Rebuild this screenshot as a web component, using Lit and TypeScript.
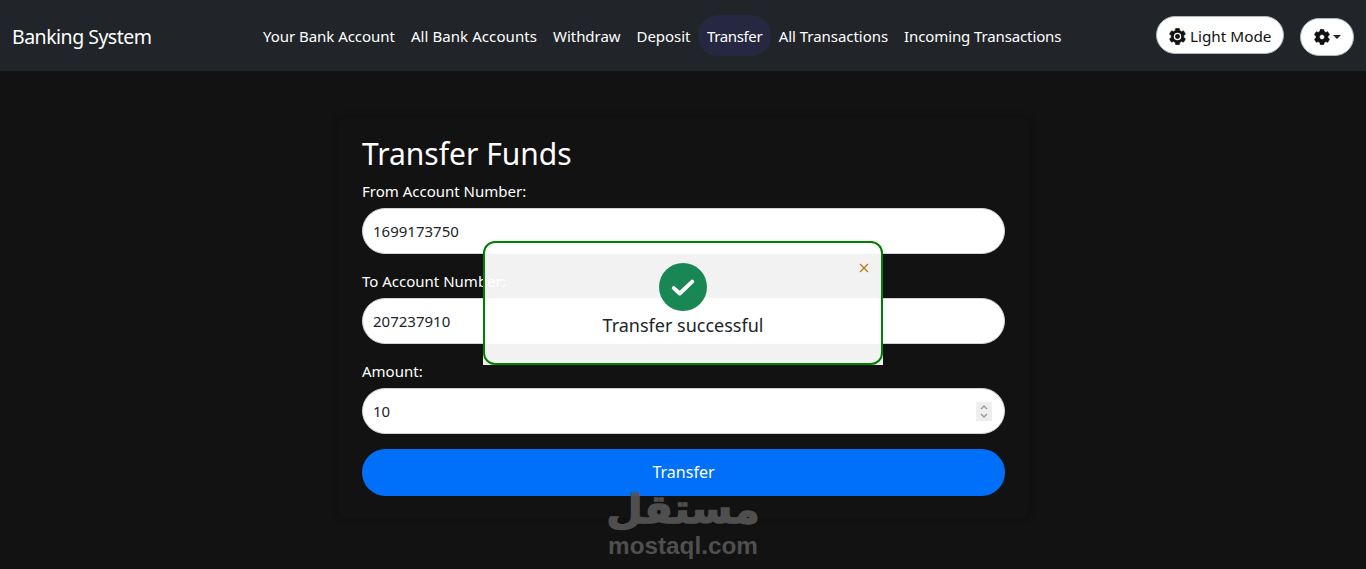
import { LitElement, html, css } from "lit";
import { customElement } from "lit/decorators.js";

const GEAR = "M487.4 315.7l-42.6-24.6c4.3-23.2 4.3-47 0-70.2l42.6-24.6c4.9-2.8 7.1-8.6 5.5-14-11.1-35.6-30-67.8-54.7-94.6-3.8-4.1-10-5.1-14.8-2.3L380.8 110c-17.9-15.4-38.5-27.3-60.8-35.1V25.8c0-5.6-3.9-10.5-9.4-11.7-36.7-8.2-74.3-7.8-109.2 0-5.5 1.2-9.4 6.1-9.4 11.7V75c-22.2 7.9-42.8 19.8-60.8 35.1L88.7 85.5c-4.9-2.8-11-1.9-14.8 2.3-24.7 26.7-43.6 58.9-54.7 94.6-1.7 5.4.6 11.2 5.5 14L67.3 221c-4.3 23.2-4.3 47 0 70.2l-42.6 24.6c-4.9 2.8-7.1 8.6-5.5 14 11.1 35.6 30 67.8 54.7 94.6 3.8 4.1 10 5.1 14.8 2.3l42.6-24.6c17.9 15.4 38.5 27.3 60.8 35.1v49.2c0 5.6 3.9 10.5 9.4 11.7 36.7 8.2 74.3 7.8 109.2 0 5.5-1.2 9.4-6.1 9.4-11.7v-49.2c22.2-7.9 42.8-19.8 60.8-35.1l42.6 24.6c4.9 2.8 11 1.9 14.8-2.3 24.7-26.7 43.6-58.9 54.7-94.6 1.5-5.5-.7-11.3-5.6-14.1zM256 336c-44.1 0-80-35.9-80-80s35.9-80 80-80 80 35.9 80 80-35.9 80-80 80z";

@customElement("app-root")
export class AppRoot extends LitElement {
  static styles = css`
    :host {
      display: block;
      height: 569px;
      overflow: hidden;
      position: relative;
      background: #121212;
      font-family: "Noto Sans", "Open Sans", sans-serif;
      color: #fff;
      font-size: 15px;
    }
    .nav {
      height: 71px;
      background: #212529;
      display: flex;
      align-items: center;
      padding: 0 12px;
      box-sizing: border-box;
    }
    .brand { font-size: 19.5px; letter-spacing: -0.5px; width: 243px; flex: none; padding-top: 2px; }
    .links { display: flex; align-items: center; flex: none; width: 881px; letter-spacing: -0.04px; }
    .link {
      padding: 0 8px;
      height: 41px;
      line-height: 43px;
      border-radius: 20px;
      white-space: nowrap;
    }
    .link:nth-child(2) { letter-spacing: 0.08px; }
    .link:nth-child(7) { letter-spacing: -0.12px; }
    .link.active { background: #252840; letter-spacing: -0.36px; padding: 0 8.5px; }
    .right { display: flex; align-items: center; margin-left: auto; }
    .btn {
      background: #fff;
      color: #111;
      border: 1px solid #adb5bd;
      border-radius: 19px;
      height: 38px;
      box-sizing: border-box;
      display: flex;
      align-items: center;
      white-space: nowrap;
    }
    .light { padding: 2px 0 0 12px; gap: 4px; width: 128px; font-size: 15.3px; margin-top: -1px; }
    .settings { margin-left: 16px; width: 54px; justify-content: center; gap: 3px; margin-top: 2px; }
    .caret { width: 0; height: 0; border-left: 4px solid transparent; border-right: 4px solid transparent; border-top: 4px solid #212529; }
    svg.gear { width: 16px; height: 16px; fill: #111; stroke: #111; stroke-width: 16; display: block; }
    svg.gear.sun { width: 17px; height: 17px; }
    .main { display: flex; justify-content: center; padding-top: 47px; }
    .card {
      width: 691px;
      box-sizing: border-box;
      padding: 16px 24px 22px;
      margin-left: 1px;
      background: #121212;
      border-radius: 8px;
      box-shadow: 0 0 8px rgba(0,0,0,.3);
    }
    h2 { margin: 0 0 7px; font-size: 30px; font-weight: 400; line-height: 40px; }
    label { display: block; line-height: 20px; height: 27px; margin-top: 5px; }
    .field {
      height: 46px;
      box-sizing: border-box;
      background: #fff;
      border: 1px solid #ced4da;
      border-radius: 23px;
      color: #212529;
      padding: 0 10px;
      display: flex;
      align-items: center;
      justify-content: space-between;
      margin-bottom: 17px;
    }
    .field.num { margin-bottom: 15px; }
    .spin { width: 16px; height: 19px; background: #eee; display: block; margin-right: 2px; }
    .submit {
      height: 47px;
      box-sizing: border-box;
      padding-bottom: 2px;
      background: #0070fb;
      border-radius: 24px;
      display: flex;
      align-items: center;
      justify-content: center;
      font-size: 16px;
    }
    .toast {
      position: absolute;
      left: 483px;
      top: 241px;
      width: 400px;
      height: 124px;
      background: rgba(255,255,255,.95);
    }
    .toast-in {
      height: 100%;
      box-sizing: border-box;
      border: 2px solid #008000;
      border-radius: 12px;
      display: flex;
      flex-direction: column;
      align-items: center;
      padding-top: 20px;
      color: #212529;
      font-size: 18px;
      position: relative;
    }
    .ok { width: 48px; height: 48px; border-radius: 50%; background: #198754; display: flex; align-items: center; justify-content: center; }
    .ok svg { width: 26px; height: 26px; }
    .msg { margin-top: -2px; line-height: 32px; }
    .x { position: absolute; right: 12px; top: 20px; width: 10px; height: 10px; }
    .wm {
      position: absolute;
      left: 608px;
      top: 486px;
      width: 150px;
      color: #555;
      text-align: center;
      pointer-events: none;
      opacity: .92;
    }
    .wm .ar {
      font-family: "DejaVu Sans", sans-serif;
      font-weight: 700;
      font-size: 40px;
      line-height: 46px;
      height: 46px;
      transform: scale(1.05, 1);
      -webkit-text-stroke: 1.5px #555;
    }
    .wm .en { font-family: "Liberation Sans", sans-serif; font-weight: 700; font-size: 24.3px; line-height: 24px; margin-top: 2px; white-space: nowrap; }
  `;

  render() {
    const links = ["Your Bank Account", "All Bank Accounts", "Withdraw", "Deposit", "Transfer", "All Transactions", "Incoming Transactions"];
    return html`
      <div class="nav">
        <div class="brand">Banking System</div>
        <div class="links">
          ${links.map((l) => html`<div class="link ${l === "Transfer" ? "active" : ""}">${l}</div>`)}
        </div>
        <div class="right">
          <div class="btn light"><svg class="gear sun" viewBox="0 0 512 512"><path d="${GEAR}"/><circle cx="256" cy="256" r="112" fill="#fff" stroke="none"/><circle cx="256" cy="256" r="74" stroke="none"/></svg>Light Mode</div>
          <div class="btn settings"><svg class="gear" viewBox="0 0 512 512"><path d="${GEAR}"/></svg><span class="caret"></span></div>
        </div>
      </div>
      <div class="main">
        <div class="card">
          <h2>Transfer Funds</h2>
          <label>From Account Number:</label>
          <div class="field">1699173750</div>
          <label>To Account Number:</label>
          <div class="field">207237910</div>
          <label>Amount:</label>
          <div class="field num">10
            <svg class="spin" viewBox="0 0 16 19"><path d="M5 7l3-3 3 3M5 12l3 3 3-3" fill="none" stroke="#999" stroke-width="1.4"/></svg>
          </div>
          <div class="submit">Transfer</div>
        </div>
      </div>
      <div class="toast">
        <div class="toast-in">
          <svg class="x" viewBox="0 0 10 10"><path d="M1 1l8 8M9 1l-8 8" stroke="#c2790f" stroke-width="1.3"/></svg>
          <div class="ok"><svg viewBox="0 0 24 24"><path d="M3.5 13l5.5 5L20.5 7" fill="none" stroke="#fff" stroke-width="3.6" stroke-linecap="round" stroke-linejoin="round"/></svg></div>
          <div class="msg">Transfer successful</div>
        </div>
      </div>
      <div class="wm">
        <div class="ar">مستقل</div>
        <div class="en">mostaql.com</div>
      </div>
    `;
  }
}
